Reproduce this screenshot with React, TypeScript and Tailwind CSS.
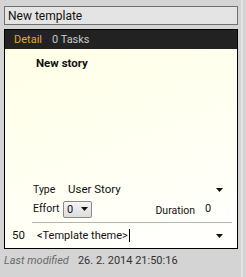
import React from "react";

const font = { fontFamily: 'Roboto, "Open Sans", sans-serif' };

function Arrow() {
  return (
    <svg width="7" height="4" viewBox="0 0 7 4" className="block">
      <path d="M0 0 H7 L3.5 4 Z" fill="#111" />
    </svg>
  );
}

export default function App() {
  return (
    <div
      className="relative w-[246px] h-[277px] bg-[#d4d4d4] overflow-hidden pt-[6px] px-[4px] text-[#111]"
      style={font}
    >
      <div className="absolute right-[3px] top-0 h-full w-[2px] bg-[#e2e2e2]" />
      <div className="w-[234px] h-[19px] border border-[#707070] bg-[#e4e4e4] flex items-center pl-[3px] text-[12px] leading-none">
        New template
      </div>
      <div className="mt-[4px] w-[234px] h-[220px] border border-black flex flex-col">
        <div className="h-[19px] bg-[#222222] flex items-center gap-[10px] pl-[9px] text-[11px] leading-none">
          <span className="text-[#e3a92b]">Detail</span>
          <span className="text-[#c8c8c8]">0 Tasks</span>
        </div>
        <div className="flex-1 flex flex-col bg-[linear-gradient(160deg,#ffffe6_0%,#fffff2_50%,#ffffff_100%)]">
          <div className="pl-[31px] pt-[6px] text-[11.5px] font-bold leading-[16px]">New story</div>
          <div className="flex-1" />
          <div className="flex items-center h-[18px] pl-[28px] pr-[14px]">
            <span className="w-[35px] text-[10.5px]">Type</span>
            <span className="flex-1 text-[11.5px]">User Story</span>
            <Arrow />
          </div>
          <div className="flex items-center h-[20px] pl-[28px] pr-[4px] text-[10.5px]">
            <span className="w-[30px]">Effort</span>
            <div className="w-[29px] h-[17px] border border-[#8a8a8a] rounded-[2px] bg-[linear-gradient(#f4f4f4,#dcdcdc)] flex items-center justify-between px-[3px]">
              <span className="text-[11px] leading-none">0</span>
              <Arrow />
            </div>
            <span className="ml-auto mt-[4px]">Duration</span>
            <span className="ml-[10px] w-[28px] text-[11px]">0</span>
          </div>
          <div className="mt-[3px] ml-[27px] mr-[5px] h-[1px] bg-[#b4b4b4]" />
          <div className="flex items-center h-[25px] pl-[7px] pr-[14px]">
            <span className="w-[25px] text-[11.5px]">50</span>
            <span className="text-[11px] leading-none">&lt;Template theme&gt;</span>
            <span className="w-[1px] h-[13px] bg-black ml-[1px]" />
            <span className="flex-1" />
            <Arrow />
          </div>
        </div>
      </div>
      <div className="mt-[6px] flex items-center gap-[9px] leading-none">
        <span className="italic text-[#6a6a6a] text-[11px]">Last modified</span>
        <span className="text-[#333] text-[11px]">26. 2. 2014 21:50:16</span>
      </div>
    </div>
  );
}
